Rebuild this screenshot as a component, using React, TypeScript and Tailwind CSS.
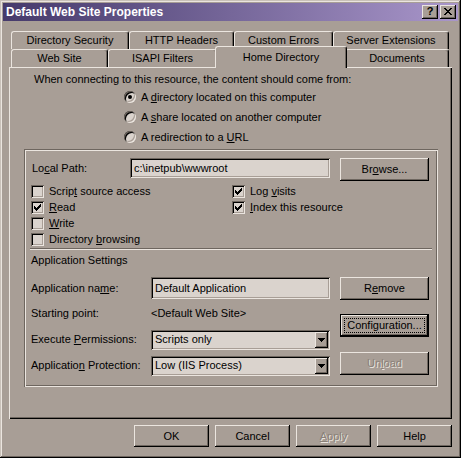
import React from 'react';

// Win2000 style bevels (tinted palette from the screenshot)
const raised = 'shadow-[inset_-1px_-1px_0_#000,inset_1px_1px_0_#ebe5df,inset_-2px_-2px_0_#6e665f]';
const sunken = 'bg-[#dad3cd] shadow-[inset_1px_1px_0_#6e665f,inset_-1px_-1px_0_#ebe5df,inset_2px_2px_0_#000,inset_-2px_-2px_0_#a89e96]';

const Acc: React.FC<{ children: React.ReactNode }> = ({ children }) => (
  <span className="underline decoration-1 underline-offset-[1px]">{children}</span>
);

const Button: React.FC<{ children: React.ReactNode; className?: string; disabled?: boolean; focused?: boolean }> = ({
  children,
  className = '',
  disabled,
  focused,
}) => {
  if (focused) {
    return (
      <div className={`flex p-[4px] shadow-[inset_0_0_0_1px_#000,inset_-2px_-2px_0_#000,inset_2px_2px_0_#ebe5df,inset_-3px_-3px_0_#6e665f] ${className}`}>
        <div className="flex-1 flex items-center justify-center border border-dotted border-black">{children}</div>
      </div>
    );
  }
  return (
    <div
      className={`flex items-center justify-center ${raised} ${
        disabled ? 'text-[#8a8179] [text-shadow:1px_1px_0_#ebe5df]' : ''
      } ${className}`}
    >
      {children}
    </div>
  );
};

const Radio: React.FC<{ checked?: boolean; children: React.ReactNode }> = ({ checked, children }) => (
  <div className="h-[20px] flex items-center gap-[5px]">
    <div className={`w-[12px] h-[12px] rounded-full flex items-center justify-center ${sunken}`}>
      {checked && <div className="w-[4px] h-[4px] rounded-full bg-black" />}
    </div>
    <span>{children}</span>
  </div>
);

const Check: React.FC<{ checked?: boolean; children: React.ReactNode }> = ({ checked, children }) => (
  <div className="h-[16px] flex items-center gap-[5px]">
    <div className={`w-[13px] h-[13px] flex items-center justify-center ${sunken}`}>
      {checked && (
        <svg width="7" height="7" viewBox="0 0 7 7" shapeRendering="crispEdges">
          <path
            d="M6 0h1v1H6zM5 1h2v1H5zM0 2h1v1H0zM4 2h3v1H4zM0 3h2v1H0zM3 3h3v1H3zM0 4h5v1H0zM1 5h3v1H1zM2 6h1v1H2z"
            fill="#000"
          />
        </svg>
      )}
    </div>
    <span>{children}</span>
  </div>
);

const Select: React.FC<{ value: string }> = ({ value }) => (
  <div className={`w-[179px] h-[20px] flex items-center pl-[4px] pr-[2px] ${sunken}`}>
    <span className="flex-1">{value}</span>
    <div className={`w-[13px] h-[16px] bg-[#a89e96] flex items-center justify-center ${raised}`}>
      <svg width="7" height="4" viewBox="0 0 7 4" shapeRendering="crispEdges">
        <path d="M0 0h7v1H0zM1 1h5v1H1zM2 2h3v1H2zM3 3h1v1H3z" fill="#000" />
      </svg>
    </div>
  </div>
);

const Tab: React.FC<{ label: string; className: string; selected?: boolean }> = ({ label, className, selected }) => (
  <div
    className={`flex justify-center border-t border-l border-r border-t-[#ebe5df] border-l-[#ebe5df] border-r-black rounded-t-[3px] shadow-[inset_-1px_0_0_#6e665f] bg-[#a89e96] ${
      selected ? 'relative z-10 h-[22px] -mb-[1px] -mx-[2px] pt-[5px]' : 'h-full items-center'
    } ${className}`}
  >
    {label}
  </div>
);

export default function App() {
  return (
    <div className="w-[461px] h-[458px] bg-[#a89e96] font-['Liberation_Sans',Arial,sans-serif] text-[11px] leading-none text-black select-none flex flex-col shadow-[inset_-1px_-1px_0_#000,inset_1px_1px_0_#c9c1b9,inset_-2px_-2px_0_#6e665f,inset_2px_2px_0_#ebe5df]">
      {/* Title bar */}
      <div className="mx-[3px] mt-[3px] h-[18px] flex items-center justify-between pl-[3px] pr-[2px] bg-linear-to-r from-[#463a6b] to-[#a996ca]">
        <span className="text-white font-bold text-[12px]">Default Web Site Properties</span>
        <div className="flex gap-[2px]">
          <div className={`w-[16px] h-[14px] bg-[#a89e96] flex items-center justify-center font-bold text-[11px] pb-[1px] ${raised}`}>?</div>
          <div className={`w-[16px] h-[14px] bg-[#a89e96] flex items-center justify-center pb-[1px] ${raised}`}>
            <svg width="8" height="7" viewBox="0 0 8 7" shapeRendering="crispEdges">
              <path
                d="M0 0h2v1H0zM6 0h2v1H6zM1 1h2v1H1zM5 1h2v1H5zM2 2h4v1H2zM3 3h2v1H3zM2 4h4v1H2zM1 5h2v1H1zM5 5h2v1H5zM0 6h2v1H0zM6 6h2v1H6z"
                fill="#000"
              />
            </svg>
          </div>
        </div>
      </div>

      {/* Tabs */}
      <div className="mt-[10px] ml-[11px] w-[438px]">
        <div className="flex h-[18px]">
          <Tab label="Directory Security" className="w-[118px]" />
          <Tab label="HTTP Headers" className="w-[105px]" />
          <Tab label="Custom Errors" className="w-[99px]" />
          <Tab label="Server Extensions" className="w-[116px]" />
        </div>
        <div className="flex h-[18px] items-end">
          <Tab label="Web Site" className="w-[97px]" />
          <Tab label="ISAPI Filters" className="w-[109px]" />
          <Tab label="Home Directory" className="w-[132px]" selected />
          <Tab label="Documents" className="w-[104px]" />
        </div>
      </div>

      {/* Panel */}
      <div className="ml-[9px] w-[443px] h-[352px] flex flex-col shadow-[inset_1px_1px_0_#ebe5df,inset_-1px_-1px_0_#000,inset_-2px_-2px_0_#6e665f]">
        <div className="mt-[5px] h-[15px] pl-[25px] flex items-center">
          When connecting to this resource, the content should come from:
        </div>
        <div className="pl-[115px] flex flex-col">
          <Radio checked>
            A <Acc>d</Acc>irectory located on this computer
          </Radio>
          <Radio>
            A <Acc>s</Acc>hare located on another computer
          </Radio>
          <Radio>
            A redirection to a <Acc>U</Acc>RL
          </Radio>
        </div>

        {/* Group box */}
        <div className="mt-[2px] ml-[15px] w-[414px] h-[238px] flex flex-col shadow-[inset_1px_1px_0_#6e665f,inset_2px_2px_0_#ebe5df,inset_-1px_-1px_0_#ebe5df,inset_-2px_-2px_0_#6e665f]">
          <div className="mt-[9px] pl-[8px] flex items-start">
            <div className="w-[98px] h-[20px] flex items-center">
              Lo<Acc>c</Acc>al Path:
            </div>
            <div className={`w-[200px] h-[20px] flex items-center pl-[4px] ${sunken}`}>c:\inetpub\wwwroot</div>
            <Button className="ml-[10px] w-[89px] h-[23px]">
              Br<Acc>o</Acc>wse...
            </Button>
          </div>

          <div className="mt-[2px] pl-[7px] flex">
            <div className="w-[201px] flex flex-col">
              <Check>
                Scrip<Acc>t</Acc> source access
              </Check>
              <Check checked>
                <Acc>R</Acc>ead
              </Check>
              <Check>
                <Acc>W</Acc>rite
              </Check>
              <Check>
                Directory <Acc>b</Acc>rowsing
              </Check>
            </div>
            <div className="flex flex-col">
              <Check checked>
                Log <Acc>v</Acc>isits
              </Check>
              <Check checked>
                <Acc>I</Acc>ndex this resource
              </Check>
            </div>
          </div>

          <div className="mt-[1px] ml-[6px] w-[402px] flex flex-col">
            <div className="h-[1px] bg-[#6e665f]" />
            <div className="h-[1px] bg-[#ebe5df]" />
          </div>

          <div className="mt-[2px] h-[16px] pl-[7px] flex items-center">Application Settings</div>

          <div className="mt-[9px] pl-[7px] flex">
            <div className="w-[299px] flex flex-col">
              <div className="h-[22px] flex items-center">
                <div className="w-[120px]">
                  Application na<Acc>m</Acc>e:
                </div>
                <div className={`w-[179px] h-[22px] flex items-center pl-[4px] ${sunken}`}>Default Application</div>
              </div>
              <div className="h-[28px] flex items-center">
                <div className="w-[120px]">Starting point:</div>
                <div>&lt;Default Web Site&gt;</div>
              </div>
              <div className="mt-[2px] h-[21px] flex items-center">
                <div className="w-[120px]">
                  Execute <Acc>P</Acc>ermissions:
                </div>
                <Select value="Scripts only" />
              </div>
              <div className="mt-[5px] h-[21px] flex items-center">
                <div className="w-[120px]">
                  Applicatio<Acc>n</Acc> Protection:
                </div>
                <Select value="Low (IIS Process)" />
              </div>
            </div>
            <div className="ml-[10px] flex flex-col">
              <Button className="w-[89px] h-[23px]">
                R<Acc>e</Acc>move
              </Button>
              <Button className="mt-[14px] w-[89px] h-[23px]" focused>
                Configuration...
              </Button>
              <Button className="mt-[15px] w-[89px] h-[23px]" disabled>
                Un<Acc>l</Acc>oad
              </Button>
            </div>
          </div>
        </div>
      </div>

      {/* Dialog buttons */}
      <div className="mt-[6px] pr-[9px] flex justify-end gap-[6px]">
        <Button className="w-[75px] h-[22px]">OK</Button>
        <Button className="w-[75px] h-[22px]">Cancel</Button>
        <Button className="w-[75px] h-[22px]" disabled>
          <Acc>A</Acc>pply
        </Button>
        <Button className="w-[75px] h-[22px]">Help</Button>
      </div>
    </div>
  );
}
